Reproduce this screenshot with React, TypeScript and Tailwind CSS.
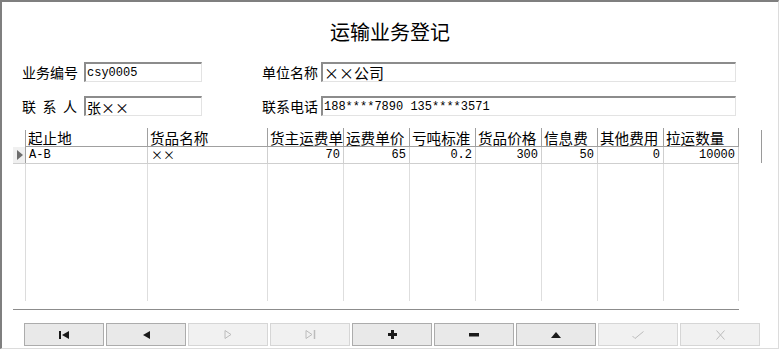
import React from 'react'

const cjk = { fontFamily: '"Noto Sans CJK SC", "Liberation Sans", sans-serif' }
const mono = { fontFamily: '"Liberation Mono", "Noto Sans CJK SC", monospace' }

// full-width rendering for the × sign, as the reference font does
function Wide({ text }: { text: string }) {
  return (
    <>
      {text.split('').map((c, i) =>
        c === '×' ? (
          <span key={i} className="inline-block w-[1em] text-center">
            {c}
          </span>
        ) : (
          <span key={i}>{c}</span>
        ),
      )}
    </>
  )
}

const columns = [
  { title: '起止地', w: 'w-[122px]', value: 'A-B', align: 'left' },
  { title: '货品名称', w: 'w-[120px]', value: '××', align: 'left' },
  { title: '货主运费单价', w: 'w-[76px]', value: '70', align: 'right' },
  { title: '运费单价', w: 'w-[66px]', value: '65', align: 'right' },
  { title: '亏吨标准', w: 'w-[66px]', value: '0.2', align: 'right' },
  { title: '货品价格', w: 'w-[66px]', value: '300', align: 'right' },
  { title: '信息费', w: 'w-[56px]', value: '50', align: 'right' },
  { title: '其他费用', w: 'w-[66px]', value: '0', align: 'right' },
  { title: '拉运数量', w: 'w-[75px]', value: '10000', align: 'right' },
]

const box =
  'h-[20px] bg-white border-t-2 border-l-2 border-t-[#8c8c8c] border-l-[#8c8c8c] border-r border-b border-r-[#e3e3e3] border-b-[#e3e3e3] pl-[1px] overflow-hidden whitespace-nowrap leading-[18px] text-black '

function Label({ text, spaced }: { text: string; spaced?: boolean }) {
  return (
    <div className={'w-[56px] text-[14px] leading-[20px] text-black ' + (spaced ? 'flex justify-between pr-[1px]' : '')} style={cjk}>
      {spaced ? text.split('').map((c, i) => <span key={i}>{c}</span>) : text}
    </div>
  )
}

const on = '#1a1a1a'
const off = '#bcbcbc'

const icons: React.ReactNode[] = [
  <svg width="11" height="8" viewBox="0 0 11 8"><rect x="0" y="0" width="2" height="8" fill={on} /><path d="M3 4 L10 0 L10 8 Z" fill={on} /></svg>,
  <svg width="7" height="8" viewBox="0 0 7 8"><path d="M0 4 L7 0 L7 8 Z" fill={on} /></svg>,
  <svg width="8" height="9" viewBox="0 0 8 9"><path d="M1 0.5 L7 4.5 L1 8.5 Z" fill="none" stroke={off} strokeWidth="1" /></svg>,
  <svg width="11" height="9" viewBox="0 0 11 9"><path d="M1 0.5 L7 4.5 L1 8.5 Z" fill="none" stroke={off} strokeWidth="1" /><path d="M9.5 0 L9.5 9" stroke={off} strokeWidth="1.5" /></svg>,
  <svg width="9" height="9" viewBox="0 0 9 9"><rect x="3" y="0" width="3" height="9" fill={on} /><rect x="0" y="3" width="9" height="3" fill={on} /></svg>,
  <svg width="10" height="4" viewBox="0 0 10 4"><rect x="0" y="0" width="10" height="3.5" fill={on} /></svg>,
  <svg width="10" height="6" viewBox="0 0 10 6"><path d="M0 6 L5 0 L10 6 Z" fill={on} /></svg>,
  <svg width="12" height="8" viewBox="0 0 12 8"><path d="M0.5 5 L3 7.5 L11.5 0.5" fill="none" stroke={off} strokeWidth="1" /></svg>,
  <svg width="9" height="10" viewBox="0 0 9 10"><path d="M0.5 0.5 L8.5 9.5 M8.5 0.5 L0.5 9.5" fill="none" stroke={off} strokeWidth="1" /></svg>,
]
const enabled = [true, true, false, false, true, true, true, false, false]

export default function App() {
  return (
    <div className="w-[779px] h-[349px] bg-white border-t-2 border-l-2 border-t-[#7f7f7f] border-l-[#7f7f7f] border-r border-b border-r-[#dcdcdc] border-b-[#dcdcdc] flex flex-col">
      {/* 标题 */}
      <div className="pt-[19px] h-[41px] text-center text-[20px] leading-[22px] text-black" style={cjk}>
        运输业务登记
      </div>

      {/* 表头信息 */}
      <div className="mt-[19px] flex items-center pl-[20px]">
        <Label text="业务编号" />
        <div className={box + 'ml-[6px] w-[118px] text-[12px]'} style={mono}>csy0005</div>
        <div className="ml-[60px]">
          <Label text="单位名称" />
        </div>
        <div className={box + 'ml-[3px] w-[415px] text-[15px]'} style={cjk}>
          <Wide text="××公司" />
        </div>
      </div>
      <div className="mt-[14px] flex items-center pl-[20px]">
        <Label text="联系人" spaced />
        <div className={box + 'ml-[6px] w-[118px] text-[14px]'} style={cjk}>
          <Wide text="张××" />
        </div>
        <div className="ml-[60px]">
          <Label text="联系电话" />
        </div>
        <div className={box + 'ml-[3px] w-[415px] text-[12px]'} style={mono}>
          188****7890 135****3571
        </div>
      </div>

      {/* 明细表格 */}
      <div className="mt-[12px] ml-[11px] flex">
        <div className="flex flex-col">
          <div className="flex h-[19px]">
            <div className="w-[13px] border-r border-r-[#a0a0a0] mt-[2px]" />
            {columns.map((c) => (
              <div
                key={c.title}
                className={'border-r border-r-[#a0a0a0] border-b border-b-[#a0a0a0] overflow-hidden whitespace-nowrap pl-[2px] pt-[1px] text-[14.6px] leading-[17px] text-black ' + c.w}
                style={cjk}
              >
                {c.title}
              </div>
            ))}
          </div>
          <div className="flex h-[17px] border-b border-b-[#cfcfcf]">
            <div className="w-[13px] border-r border-r-[#a0a0a0] bg-[#f0f0f0] flex items-center pl-[4px]">
              <svg width="6" height="10" viewBox="0 0 6 10"><path d="M0 0 L6 5 L0 10 Z" fill="#6e6e6e" /></svg>
            </div>
            {columns.map((c) => (
              <div
                key={c.title}
                className={'border-r border-r-[#cfcfcf] overflow-hidden whitespace-nowrap px-[3px] text-[12px] leading-[16px] text-black ' + c.w + (c.align === 'right' ? ' text-right' : ' text-left')}
                style={c.value === '××' ? cjk : mono}
              >
                {c.value === '××' ? <Wide text={c.value} /> : c.value}
              </div>
            ))}
          </div>
          <div className="flex h-[137px]">
            <div className="w-[13px] border-r border-r-[#dcdcdc]" />
            {columns.map((c) => (
              <div key={c.title} className={'border-r border-r-[#dedede] ' + c.w} />
            ))}
          </div>
        </div>
        <div className="ml-[22px] mt-[2px] w-px h-[33px] bg-[#9a9a9a]" />
      </div>

      <div className="mt-[8px] ml-[11px] w-[726px] h-px bg-[#8c8c8c]" />

      {/* 导航按钮 */}
      <div className="mt-[13px] ml-[22px] flex gap-[2px]">
        {icons.map((ic, i) => (
          <div
            key={i}
            className={
              'w-[80px] h-[23px] flex items-center justify-center border ' +
              (enabled[i] ? 'bg-[#e9e9e9] border-[#acacac]' : 'bg-[#f1f1f1] border-[#d6d6d6]')
            }
          >
            {ic}
          </div>
        ))}
      </div>
    </div>
  )
}
